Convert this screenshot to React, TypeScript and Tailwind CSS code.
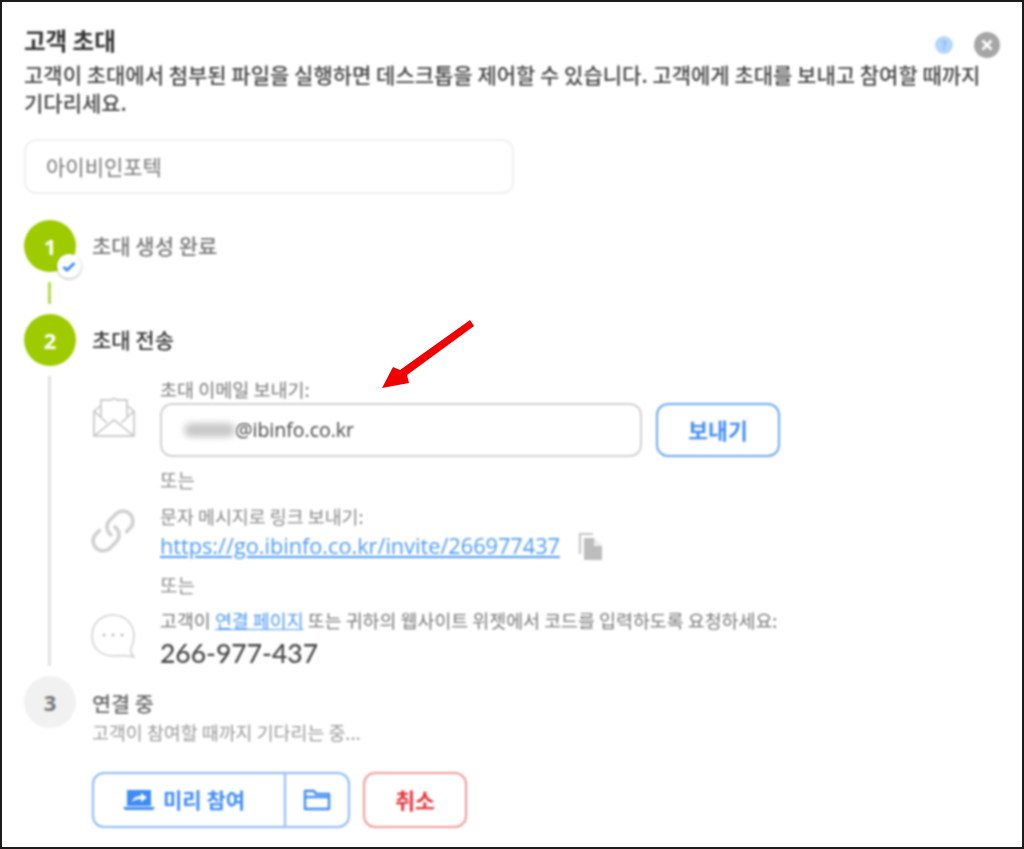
import { Link as LinkIcon } from 'lucide-react';

const KR = "font-['Noto_Sans_CJK_KR','Noto_Sans',sans-serif]";

function EnvelopeIcon() {
  return (
    <svg width="44" height="44" viewBox="0 0 44 44" fill="none" stroke="#bdbdbd" strokeWidth="1.4">
      <path d="M2 15 L2 40 L42 40 L42 15" />
      <path d="M2 15 L10 9 M42 15 L34 9" />
      <path d="M9 20 L9 4 L19 4 Q22 1 25 4 L35 4 L35 20" fill="#fff" />
      <path d="M2 40 L22 24 L42 40" />
      <path d="M2 15 L15 27 M42 15 L29 27" />
    </svg>
  );
}

function ChatIcon() {
  return (
    <svg width="46" height="46" viewBox="0 0 46 46" fill="none" stroke="#cfcfcf" strokeWidth="1.5">
      <path d="M23 2 C10 2 2 11 2 23 C2 35 11 43 23 43 C29 43 34 42 38 43 L44 44 C41 41 40 38 41 35 C43 31 44 27 44 23 C44 11 35 2 23 2 Z" />
      <circle cx="14" cy="22" r="1.5" fill="#bbb" stroke="none" />
      <circle cx="23" cy="22" r="1.5" fill="#bbb" stroke="none" />
      <circle cx="32" cy="22" r="1.5" fill="#bbb" stroke="none" />
    </svg>
  );
}

function CopyIcon() {
  return (
    <svg width="25" height="29" viewBox="0 0 25 29">
      <path d="M2 22 L2 2 L15 2" fill="none" stroke="#c6c6c6" strokeWidth="2.2" />
      <path d="M6 6 L16 6 L24 14 L24 28 L6 28 Z" fill="#bdbdbd" />
      <path d="M16 6 L16 14 L24 14 Z" fill="#eee" />
    </svg>
  );
}

function LaptopIcon() {
  return (
    <svg width="32" height="22" viewBox="0 0 32 22">
      <path d="M4 1 L28 1 L28 17 L4 17 Z" fill="#3f8cf5" />
      <path d="M0 18 L32 18 L30 21 L2 21 Z" fill="#3f8cf5" />
      <path d="M9 13 C10 9 13 7 18 7 L18 4 L24 8.5 L18 13 L18 10 C14 10 11 11 9 13 Z" fill="#fff" />
    </svg>
  );
}

function FolderIcon() {
  return (
    <svg width="28" height="24" viewBox="0 0 28 24" fill="none" stroke="#3f8cf5" strokeWidth="2.4" strokeLinejoin="round">
      <path d="M2 21 L2 3 L11 3 L13 6 L26 6 L26 21 Z" />
      <path d="M2 9 L26 9" />
    </svg>
  );
}

function StepCircle({ n, done }: { n: number; done?: boolean }) {
  return (
    <div className={`w-[52px] h-[52px] shrink-0 rounded-full flex items-center justify-center font-['Noto_Sans',sans-serif] font-bold text-[22px] ${n === 3 ? 'bg-[#f1f1f1] text-[#777]' : 'bg-[#9ecb00] text-white'} relative`}>
      {n}
      {done && (
        <span className="absolute left-[33px] top-[34px] w-6 h-6 rounded-full bg-white shadow-[0_1px_3px_rgba(0,0,0,0.3)] flex items-center justify-center">
          <svg width="14" height="11" viewBox="0 0 14 11">
            <path d="M1.5 6 L5 9 L12.5 2" fill="none" stroke="#3f8cf5" strokeWidth="2.8" />
          </svg>
        </span>
      )}
    </div>
  );
}

export default function App() {
  return (
    <div className={`relative w-[1024px] h-[849px] box-border border-2 border-[#1c1c1c] bg-white overflow-hidden ${KR}`}>
      <div className="blur-[0.8px] pl-[22px] pr-[22px] pt-[26px]">
        <div className="flex justify-between h-6">
          <h1 className="text-[23.5px] leading-6 font-bold text-[#333]">고객 초대</h1>
          <div className="flex items-center gap-[21px] h-[26px] mt-[4px]">
            <span className="w-[18px] h-[18px] rounded-full bg-[#b5d6fb] text-[#8fb9ec] text-[12px] font-bold flex items-center justify-center">?</span>
            <span className="w-[26px] h-[26px] rounded-full bg-[#a6a6a6] flex items-center justify-center">
              <svg width="12" height="12" viewBox="0 0 12 12">
                <path d="M1.5 1.5 L10.5 10.5 M10.5 1.5 L1.5 10.5" stroke="#fff" strokeWidth="2.6" />
              </svg>
            </span>
          </div>
        </div>

        <p className="mt-[8px] text-[21px] leading-7 font-medium text-[#444] w-[970px]">
          고객이 초대에서 첨부된 파일을 실행하면 데스크톱을 제어할 수 있습니다. 고객에게 초대를 보내고 참여할 때까지 기다리세요.
        </p>

        <div className="mt-[23px] w-[490px] h-[55px] rounded-xl border-2 border-[#f0f0f0] pl-[20px] flex items-center text-[21px] text-[#777]">
          아이비인포텍
        </div>

        {/* step 1 */}
        <div className="mt-[26px] flex items-start gap-[16px]">
          <StepCircle n={1} done />
          <span className="mt-[13px] text-[21px] leading-6 font-medium text-[#777]">초대 생성 완료</span>
        </div>
        <div className="ml-[24px] mt-[10px] w-[3px] h-[22px] bg-[#b5d94a]" />

        {/* step 2 */}
        <div className="mt-[10px] flex items-start gap-[16px]">
          <StepCircle n={2} />
          <span className="mt-[13px] text-[21px] leading-6 font-medium text-[#333]">초대 전송</span>
        </div>
        <div className="ml-[24px] mt-[10px] h-[290px] border-l-[3px] border-[#e2e2e2] pl-[41px] pt-[3px]">
          <div className="flex">
            <div className="w-[68px] pt-[17px]">
              <EnvelopeIcon />
            </div>
            <div>
              <div className="text-[18.5px] leading-5 text-[#777]">초대 이메일 보내기:</div>
              <div className="mt-[4px] flex gap-[14px]">
                <div className="w-[482px] h-[54px] rounded-xl border-2 border-[#d2d2d2] pl-[22px] flex items-center text-[19.5px] text-[#444] font-['Open_Sans',sans-serif]">
                  <span className="w-[51px] h-[14px] rounded-full bg-[#c8c8c8] blur-[3px]" />
                  @ibinfo.co.kr
                </div>
                <button className="w-[124px] h-[54px] rounded-xl border-2 border-[#6ea8f7] bg-white text-[21.5px] font-bold text-[#3f8cf5]">
                  보내기
                </button>
              </div>
            </div>
          </div>

          <div className="mt-[13px] ml-[68px] text-[19px] leading-5 text-[#8a8a8a]">또는</div>

          <div className="mt-[16px] flex">
            <div className="w-[68px] -ml-[3px] mr-[3px] pt-[1px]">
              <LinkIcon size={48} strokeWidth={1.8} color="#d0d0d0" className="-scale-x-100 rotate-90" />
            </div>
            <div>
              <div className="text-[18.4px] leading-5 text-[#888]">문자 메시지로 링크 보내기:</div>
              <div className="mt-[6px] flex items-center gap-[18px] h-7">
                <a className="text-[21.7px] leading-7 text-[#4d9af5] underline font-['Open_Sans',sans-serif]">
                  https://go.ibinfo.co.kr/invite/266977437
                </a>
                <CopyIcon />
              </div>
            </div>
          </div>

          <div className="mt-[15px] ml-[68px] text-[19px] leading-5 text-[#8a8a8a]">또는</div>

          <div className="mt-[15px] flex">
            <div className="w-[68px] -ml-[2px] mr-[2px] pt-[3px]">
              <ChatIcon />
            </div>
            <div>
              <div className="text-[18.4px] leading-5 text-[#777] whitespace-nowrap">
                고객이 <a className="text-[#4d9af5] underline">연결 페이지</a> 또는 귀하의 웹사이트 위젯에서 코드를 입력하도록 요청하세요:
              </div>
              <div className="mt-[7px] text-[26.5px] leading-8 font-medium text-[#444] font-['Lato',sans-serif]">266-977-437</div>
            </div>
          </div>
        </div>

        {/* step 3 */}
        <div className="mt-[10px] flex items-start gap-[16px]">
          <StepCircle n={3} />
          <div className="pt-[15px]">
            <div className="text-[20.7px] leading-6 font-medium text-[#666]">연결 중</div>
            <div className="mt-[7px] text-[18.4px] leading-5 text-[#999]">고객이 참여할 때까지 기다리는 중...</div>
          </div>
        </div>

        <div className="mt-[30px] ml-[68px] flex gap-[13px]">
          <div className="flex w-[258px] h-[56px] rounded-xl border-2 border-[#8db9f8] text-[#3f8cf5]">
            <button className="w-[192px] pr-[10px] flex items-center justify-center gap-[8px] text-[21px] font-bold border-r-2 border-[#8db9f8]">
              <LaptopIcon />
              미리 참여
            </button>
            <button className="flex-1 flex items-center justify-center">
              <FolderIcon />
            </button>
          </div>
          <button className="w-[104px] h-[56px] rounded-xl border-2 border-[#f09a9a] text-[21.5px] font-bold text-[#e5343a]">
            취소
          </button>
        </div>
      </div>

      {/* annotation arrow */}
      <svg className="absolute left-[378px] top-[316px]" width="96" height="74" viewBox="0 0 96 74">
        <path d="M90 2 L94 8 L27 57 L29 65 L2 70 L13 49 L20 52 Z" fill="#f00000" />
      </svg>
    </div>
  );
}
